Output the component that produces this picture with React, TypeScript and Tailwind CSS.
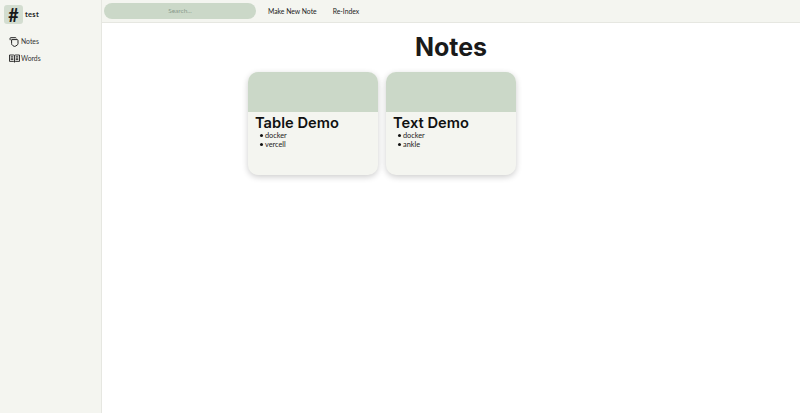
const NoteCard = ({ title, tags }: { title: string; tags: string[] }) => (
  <div className="h-[103px] rounded-[10px] bg-[#f4f5f0] shadow-[0_2px_6px_rgba(0,0,0,0.2)] overflow-hidden">
    <div className="h-[40px] bg-[#cbd8c8]" />
    <div className="px-[7px] pt-[4px]">
      <h2 className="text-[14.7px] leading-[15px] font-semibold text-[#111]">{title}</h2>
      <ul className="pl-[5px] font-['Lato',sans-serif] text-[7.3px] leading-[9px] text-[#222]">
        {tags.map((t) => (
          <li key={t} className="flex items-center gap-[2.5px]">
            <span className="size-[2.5px] rounded-full bg-[#111]" />
            {t}
          </li>
        ))}
      </ul>
    </div>
  </div>
);

// notes icon: two overlapping sheets
const NotesIcon = () => (
  <svg width="10" height="10" viewBox="0 0 10 10" fill="none" stroke="#222" strokeWidth="1" className="shrink-0">
    <path d="M1.2 3.2 L1 1.5 Q1 .7 1.8 .7 L6.5 .7 Q7.2 .7 7.4 1.3" />
    <path d="M2.7 2.6 H8.2 Q9 2.6 9 3.4 V6.6 Q9 7.6 8 8.2 L6.2 9.3 Q5.6 9.5 5 9.3 L3.6 8.4 Q2.6 7.8 2.6 6.6 V3 Z" />
  </svg>
);

// words icon: open dictionary with lines of text
const WordsIcon = () => (
  <svg width="11" height="9" viewBox="0 0 11 9" fill="none" stroke="#222" strokeWidth="0.9" className="shrink-0">
    <path d="M.5 1H4.6Q5.5 1 5.5 1.8Q5.5 1 6.4 1H10.5V7.4H6.4Q5.5 7.4 5.5 8.2Q5.5 7.4 4.6 7.4H.5Z" />
    <path d="M5.5 1.8V8.2M1.7 2.8H4.3M1.7 4.2H4.3M1.7 5.6H4.3M6.7 2.8H9.3M6.7 4.2H9.3M6.7 5.6H9.3" />
  </svg>
);

export default function App() {
  return (
    <div className="flex h-[413px] w-[800px] overflow-hidden bg-white font-['Inter',sans-serif]">
      <aside className="w-[102px] shrink-0 border-r border-[#e6e7e1] bg-[#f4f5f0] pl-[4px] pt-[5px] font-['Lato',sans-serif]">
        <div className="flex items-center gap-[2px]">
          <div className="flex size-[19px] items-center justify-center rounded-[3px] bg-[#d3ddd0] text-[18px] font-bold leading-none text-[#1a1a1a]">#</div>
          <span className="text-[7.5px] font-bold tracking-[0.3px] text-[#222]">test</span>
        </div>
        <nav className="mt-[12px] flex flex-col gap-[6px] pl-[5px] text-[6.8px] text-[#333]">
          <div className="flex h-[11px] items-center gap-[2px]"><NotesIcon />Notes</div>
          <div className="flex h-[11px] items-center gap-[1px]"><WordsIcon />Words</div>
        </nav>
      </aside>
      <div className="min-w-0 flex-1">
        <header className="flex h-[23px] items-center border-b border-[#e6e7e1] bg-[#f4f5f0] pl-[2px] font-['Lato',sans-serif] text-[6.8px] text-[#222]">
          <div className="flex h-[16px] w-[152px] items-center justify-center rounded-full bg-[#cbd8c8] text-[6.5px] text-[#8a9a8c]">Search...</div>
          <span className="ml-[12px]">Make New Note</span>
          <span className="ml-[16px]">Re-Index</span>
        </header>
        <main>
          <h1 className="mb-[9px] mt-[8px] text-center text-[25px] leading-[32px] font-bold text-[#1a1a1a]">Notes</h1>
          <div className="ml-[146px] grid grid-cols-[130px_130px] gap-[8px]">
            <NoteCard title="Table Demo" tags={['docker', 'vercell']} />
            <NoteCard title="Text Demo" tags={['docker', 'ankle']} />
          </div>
        </main>
      </div>
    </div>
  );
}
